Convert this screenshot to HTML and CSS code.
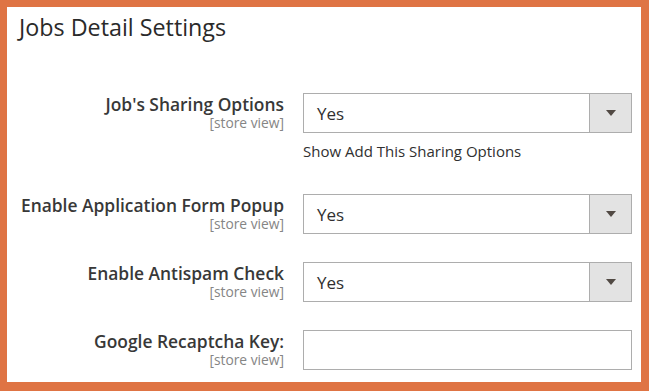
FILE: index.html
```html
<!DOCTYPE html>
<html lang="en">
<head>
    <meta charset="UTF-8">
    <title>Jobs Detail Settings</title>
    <link rel="stylesheet" href="styles.css">
</head>
<body>
    <div class="settings-panel">
        <h2 class="section-title">Jobs Detail Settings</h2>

        <div class="field-row">
            <div class="field-label">
                <span class="label-text">Job's Sharing Options</span>
                <span class="scope">[store view]</span>
            </div>
            <div class="field-control">
                <div class="select-box">
                    <span class="select-value">Yes</span>
                    <span class="select-arrow"></span>
                </div>
                <div class="field-note">Show Add This Sharing Options</div>
            </div>
        </div>

        <div class="field-row">
            <div class="field-label">
                <span class="label-text">Enable Application Form Popup</span>
                <span class="scope">[store view]</span>
            </div>
            <div class="field-control">
                <div class="select-box">
                    <span class="select-value">Yes</span>
                    <span class="select-arrow"></span>
                </div>
            </div>
        </div>

        <div class="field-row">
            <div class="field-label">
                <span class="label-text">Enable Antispam Check</span>
                <span class="scope">[store view]</span>
            </div>
            <div class="field-control">
                <div class="select-box">
                    <span class="select-value">Yes</span>
                    <span class="select-arrow"></span>
                </div>
            </div>
        </div>

        <div class="field-row">
            <div class="field-label">
                <span class="label-text">Google Recaptcha Key:</span>
                <span class="scope">[store view]</span>
            </div>
            <div class="field-control">
                <input type="text" class="text-input">
            </div>
        </div>
    </div>
</body>
</html>
```

FILE: styles.css
```css
/* Global */
body {
    margin: 0;
    padding: 0;
    background-color: #df7444;
    font-family: "Open Sans", Arial, sans-serif;
    color: #303030;
}

/* Panel */
.settings-panel {
    margin: 7px 8px 9px 7px;
    height: 375px;
    box-sizing: border-box;
    background-color: #ffffff;
    padding: 4px 9px 0 12px;
}

.section-title {
    margin: 0 0 50px 0;
    font-size: 23.3px;
    font-weight: 400;
    line-height: 32px;
    color: #2a2a2a;
}

/* Rows */
.field-row {
    display: grid;
    grid-template-columns: 265px 329px;
    column-gap: 19px;
    margin-bottom: 28px;
}

.field-label {
    display: flex;
    flex-direction: column;
    align-items: flex-end;
    text-align: right;
}

.label-text {
    font-size: 17.4px;
    font-weight: 600;
    line-height: 22px;
    color: #383838;
}

.scope {
    font-size: 13.8px;
    line-height: 16px;
    color: #858585;
}

/* Select */
.select-box {
    display: flex;
    align-items: center;
    height: 40px;
    box-sizing: border-box;
    border: 1px solid #adadad;
    background-color: #ffffff;
}

.select-value {
    flex: 1;
    padding-left: 13px;
    font-size: 17px;
    color: #303030;
}

.select-arrow {
    width: 41px;
    height: 100%;
    background-color: #e3e3e3;
    border-left: 1px solid #adadad;
    display: flex;
    justify-content: center;
    align-items: center;
}

.select-arrow::after {
    content: "";
    border-left: 5px solid transparent;
    border-right: 5px solid transparent;
    border-top: 6px solid #514943;
}

.field-note {
    margin: 8px 0 5px 0;
    font-size: 15px;
    line-height: 20px;
    color: #303030;
}

/* Text input */
.text-input {
    display: block;
    width: 100%;
    height: 40px;
    box-sizing: border-box;
    border: 1px solid #adadad;
    margin: 0;
    padding: 0 10px;
    font-family: inherit;
    font-size: 16px;
}
```
